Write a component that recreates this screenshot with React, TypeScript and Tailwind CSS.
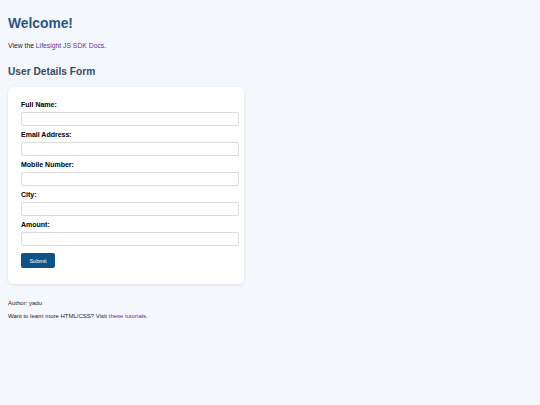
export default function App() {
  const fields = ["Full Name:", "Email Address:", "Mobile Number:", "City:", "Amount:"];

  return (
    <div className="min-h-[405px] bg-[#f4f8fc] px-2 pt-[16px] font-['Liberation_Sans',Arial,sans-serif] text-[#222]">
      <h1 className="text-[13.8px] font-bold leading-[16px] text-[#2b5684]">Welcome!</h1>
      <p className="mt-[8.5px] text-[6.8px] leading-[9px]">
        View the{" "}
        <a href="#" className="text-[#6b2ca0]">
          Lifesight JS SDK Docs
        </a>
        .
      </p>

      <h2 className="mt-[16.5px] text-[10.2px] font-bold leading-[12px] text-[#3a4a5c]">
        User Details Form
      </h2>

      <form className="mt-[9px] w-[236px] rounded-[5px] bg-white pb-[14px] pl-[13px] pr-[5px] pt-[13.5px] shadow-[0_1px_3px_rgba(0,0,0,0.1)]">
        <div className="flex flex-col gap-[5px]">
          {fields.map((label) => (
            <label key={label} className="block">
              <span className="block text-[7px] font-bold leading-[8px] text-black">{label}</span>
              <input
                type="text"
                className="mt-[3px] block h-[14px] w-full rounded-[2px] border border-[#dcdcdc] bg-white"
              />
            </label>
          ))}
        </div>
        <button
          type="button"
          className="mt-[7.5px] h-[15px] w-[34px] rounded-[2px] bg-[#0e5287] text-[5.5px] text-white"
        >
          Submit
        </button>
      </form>

      <p className="mt-[15.5px] text-[6px] leading-[8px]">Author: yadu</p>
      <p className="mt-[5px] text-[6px] leading-[8px]">
        Want to learn more HTML/CSS? Visit{" "}
        <a href="#" className="text-[#6b2ca0]">
          these tutorials
        </a>
        .
      </p>
    </div>
  );
}
